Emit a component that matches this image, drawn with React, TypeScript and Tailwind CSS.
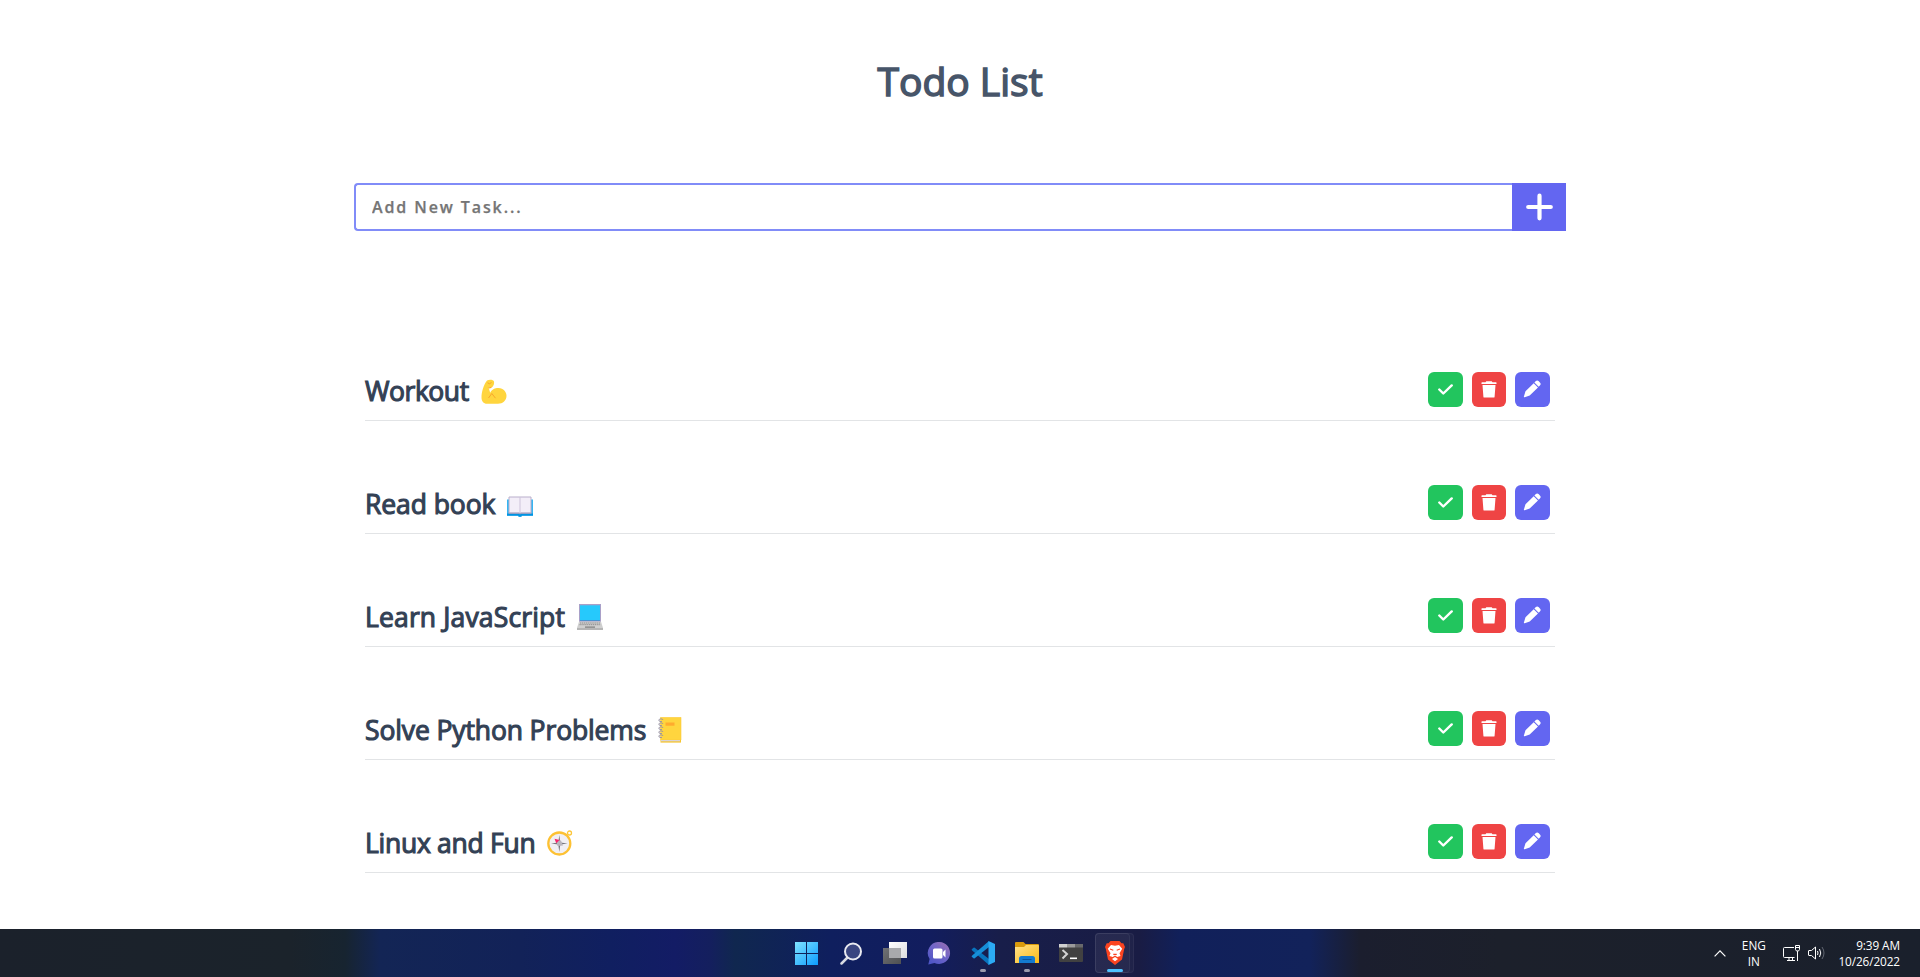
import type { ReactNode } from 'react';

function Arm() {
  return (
    <svg viewBox="0 0 26 26" className="h-[26px] w-[26px]">
      <path d="M6 1.5C8 .2 12.5.4 13 2.6c.4 1.8-.3 4.2-1.600 5.400L7.600 8.500l1.600 5.200C11 9.800 15 8.800 17.500 9c5 .3 8 3.800 8 7.800 0 4.600-3.600 8-8.500 8H6C2.500 24.800.5 22 .5 18.500.5 13 2.500 6 6 1.500Z" fill="#ffd53e" />
      <path d="M6.500 3.800q2 2 4-.3M7.500 19l3.300-4.500 3.700 4.700" fill="none" stroke="#f9a72b" strokeWidth="1" />
      <path d="m6.800 8.600 4.300-.8q-.6 1.500-2.700 1.700Z" fill="#f9a72b" />
    </svg>
  );
}

function Book() {
  return (
    <svg viewBox="0 0 26 26" className="h-[26px] w-[26px]">
      <path d="M0 5.500h2V3.800h22v1.700h2v16H14.500v1h-3v-1H0Z" fill="#35b5f2" />
      <path d="M0 19.500h26v2.300H14.500v1h-3v-1H0Z" fill="#0093e2" />
      <path d="M2 3h22v16H2Z" fill="#f3eef8" stroke="#b9aecb" />
      <path d="M13 3v16.500" stroke="#cdc3da" />
      <path d="M1.500 19.200H12l1 1 1-1h10.500" fill="none" stroke="#a79dba" />
    </svg>
  );
}

function Laptop() {
  return (
    <svg viewBox="0 0 26 26" className="h-[26px] w-[26px]">
      <path d="M2 0h22v18H2Z" fill="#a9a0c8" />
      <path d="M3 1.300h20V16H3Z" fill="#26c9fc" />
      <path d="M3 16.500h20" stroke="#4a93cf" />
      <path d="M2 17.500h22l2 6.500H0Z" fill="#cfcfcf" />
      <path d="M0 24h26v2H0Z" fill="#b5b5b5" />
      <path d="M3 19h20M2.500 20.700h21" stroke="#8e8e8e" strokeDasharray="1.300 .6" />
      <path d="M8 22.300h10v1.700H8Z" fill="#949494" />
    </svg>
  );
}

function Notebook() {
  return (
    <svg viewBox="0 0 26 26" className="h-[26px] w-[26px]">
      <path d="M2.500.3H23V23H2.500Z" fill="#ffd53e" stroke="#fbc93a" strokeWidth=".6" />
      <path d="M2.500 23H23v2.600H2.500Z" fill="#f6c52f" />
      <path d="M3 23h19v1.300H3Z" fill="#d9d3d8" />
      <path d="M7.500 5.500h9v3.200h-9Z" fill="#ffab2e" />
      <path d="M5 3c0-1.500-4-1.500-4.200 0S3 4.700 4 4.500M5 7c0-1.500-4-1.500-4.200 0S3 8.700 4 8.500M5 11c0-1.500-4-1.500-4.200 0s2.200 1.700 3.200 1.500M5 15c0-1.500-4-1.500-4.200 0s2.200 1.700 3.200 1.500M5 19c0-1.500-4-1.500-4.200 0s2.200 1.700 3.200 1.500" fill="none" stroke="#9a94a3" strokeWidth="1" />
    </svg>
  );
}

function Compass() {
  return (
    <svg viewBox="0 0 26 26" className="h-[26px] w-[26px]">
      <circle cx="22.500" cy="3" r="2" fill="none" stroke="#fcc63a" strokeWidth="1.300" />
      <circle cx="12.300" cy="13.500" r="11" fill="#f1eff3" stroke="#fdc133" strokeWidth="2.300" />
      <path d="m12.300 5 1 7.500 7.300 1-7.300 1-1 7.500-1-7.500-7.300-1 7.300-1Z" fill="#77757c" />
      <path d="m9 10 5 .5 2 5-5.500.5Z" fill="#b9b5bd" />
      <path d="m7.500 8.700 5 1.300-3.200 3.300Z" fill="#f8236c" />
    </svg>
  );
}

const tasks: { label: string; spacing: string; icon: ReactNode; offset: string }[] = [
  { label: 'Workout', spacing: 'w-[116px] tracking-[-0.450px]', icon: <Arm />, offset: 'pt-[71px]' },
  { label: 'Read book', spacing: 'w-[142px] tracking-[-0.080px]', icon: <Book />, offset: 'pt-[73px]' },
  { label: 'Learn JavaScript', spacing: 'w-[212px] tracking-[0.150px]', icon: <Laptop />, offset: 'pt-[70px]' },
  { label: 'Solve Python Problems', spacing: 'w-[293px] tracking-[-0.120px]', icon: <Notebook />, offset: 'pt-[70px]' },
  { label: 'Linux and Fun', spacing: 'w-[182px] tracking-[-0.280px]', icon: <Compass />, offset: 'pt-[70px]' },
];

function TaskRow({ task }: { task: (typeof tasks)[number] }) {
  return (
    <li className="flex h-[113px] justify-between border-b border-[#e2e4e6] pr-[5px]">
      <div className="flex">
        <span className={`pt-[64px] text-[26.500px] leading-[38px] font-medium whitespace-nowrap text-[#334155] [-webkit-text-stroke:1.1px_#334155] ${task.spacing}`}>{task.label}</span>
        <span className={task.offset}>{task.icon}</span>
      </div>
      <div className="flex pt-[64px]">
        <button aria-label="Complete" className="mr-[9px] flex h-[35px] w-[35px] items-center justify-center rounded-md bg-[#22c55e] text-white">
          <svg viewBox="0 0 16 12" className="h-[12px] w-[16px]">
            <path d="m1.300 5.500 4 4L13.700 1.400" fill="none" stroke="currentColor" strokeWidth="2.400" strokeLinecap="round" strokeLinejoin="round" />
          </svg>
        </button>
        <button aria-label="Delete" className="mr-[9px] flex h-[35px] w-[34px] items-center justify-center rounded-md bg-[#ef4444] text-white">
          <svg viewBox="0 0 16 17" className="h-[17px] w-[16px]" fill="currentColor">
            <path d="M5.300.3h5.400l.8.900H15a.5.5 0 0 1 .5.5V3H.5V1.700a.5.5 0 0 1 .5-.5h3.500ZM1.500 4.100h13l-.9 11.600a.9.9 0 0 1-.9.900H3.300a.9.9 0 0 1-.9-.9Z" />
          </svg>
        </button>
        <button aria-label="Edit" className="flex h-[35px] w-[35px] items-center justify-center rounded-md bg-[#6366f1] text-white">
          <svg viewBox="0 0 18 18" className="mr-px mb-px h-[18px] w-[18px]" fill="currentColor">
            <path d="M12.600 1.300a2.300 2.300 0 0 1 3.200 0l1.100 1.100a2.300 2.300 0 0 1 0 3.200l-1.200 1.200-4.300-4.300ZM10.700 3.200 15 7.500l-8.300 8-5 1.700a.6.6 0 0 1-.8-.8L2.500 11.300Z" />
          </svg>
        </button>
      </div>
    </li>
  );
}

function Taskbar() {
  return (
    <footer className="grid h-[48px] grid-cols-[785px_352px_1fr] bg-[linear-gradient(90deg,#1b212b_0px,#1b232b_290px,#172430_345px,#132555_380px,#122258_520px,#101f60_610px,#131c65_675px,#141f5e_710px,#10274f_735px,#0f1f5e_830px,#121d5e_930px,#181e4a_1000px,#191c44_1140px,#11205a_1180px,#12225a_1310px,#1b1e2e_1360px,#1c202b_1500px,#1a202c_1920px)] font-['Open_Sans','Noto_Sans',sans-serif] text-white">
      <div />
      <div className="flex items-center">
        <div className="flex w-[44px] justify-center pr-[2px]">
          <svg viewBox="0 0 23 23" className="mt-px h-[23px] w-[23px]">
            <defs><linearGradient id="win" x2="1" y2="1"><stop stopColor="#7fe3ff" /><stop offset="1" stopColor="#0c9cff" /></linearGradient></defs>
            <path d="M0 0h11v11H0ZM12 0h11v11H12ZM0 12h11v11H0ZM12 12h11v11H12Z" fill="url(#win)" />
          </svg>
        </div>
        <div className="flex w-[44px] justify-center">
          <svg viewBox="0 0 23 23" className="h-[23px] w-[23px]" fill="none">
            <path d="m7.500 15.500-6 6" stroke="#d7dae1" strokeWidth="2.500" strokeLinecap="round" />
            <circle cx="13" cy="9.500" r="8" fill="#3a4680" stroke="#e9eaf0" strokeWidth="2" />
          </svg>
        </div>
        <div className="flex w-[44px] justify-center">
          <svg viewBox="0 0 24 22" className="h-[22px] w-[24px]">
            <defs>
              <linearGradient id="dark" x2="1" y2="1"><stop stopColor="#6f7175" /><stop offset="1" stopColor="#4f5052" /></linearGradient>
              <linearGradient id="light" x2="1" y2="1"><stop stopColor="#fff" /><stop offset="1" stopColor="#dcdcde" /></linearGradient>
            </defs>
            <path d="M0 6h18v16H0Z" fill="url(#dark)" />
            <path d="M6 0h18v16H6Z" fill="url(#light)" />
            <path d="M6 6h12v10H6Z" fill="#a8a9ac" />
          </svg>
        </div>
        <div className="flex w-[44px] justify-center">
          <svg viewBox="0 0 24 23" className="mt-px h-[23px] w-[24px]">
            <defs><linearGradient id="chat" x1="1" x2=".2" y2="1"><stop stopColor="#9c70ae" /><stop offset=".5" stopColor="#7065c8" /><stop offset="1" stopColor="#4d55c5" /></linearGradient></defs>
            <path d="M12.500 0a11 11 0 1 1-5 21L1.300 22.400 2.600 17A11 11 0 0 1 12.500 0Z" fill="url(#chat)" />
            <rect x="6" y="6.500" width="9.500" height="10" rx="1.500" fill="#fff" />
            <path d="m16 10 2.500-2.500v8L16 13Z" fill="#fff" />
          </svg>
        </div>
        <div className="relative flex h-[48px] w-[44px] items-center justify-center">
          <svg viewBox="0 0 24 24" className="mb-px h-[24px] w-[24px]">
            <path d="m1 8 1.500-1.300a1 1 0 0 1 1.200 0L18 18v6L.9 9.300a.9.9 0 0 1 .1-1.300Z" fill="#0873bd" />
            <path d="m1 16 1.500 1.300a1 1 0 0 0 1.200 0L18 6V0L.9 14.700A.9.9 0 0 0 1 16Z" fill="#168ed8" />
            <path d="M17.500 0 24 3v18l-6.500 3Z" fill="#2cabf4" />
          </svg>
          <span className="absolute bottom-[5px] h-[3px] w-[6px] rounded-full bg-[#9a9bad]" />
        </div>
        <div className="relative flex h-[48px] w-[44px] items-center justify-center">
          <svg viewBox="0 0 24 22" className="h-[22px] w-[24px]">
            <defs><linearGradient id="folder" x2="1" y2="1"><stop stopColor="#ffe28a" /><stop offset="1" stopColor="#f9b916" /></linearGradient></defs>
            <path d="M1 0h7.500l2 2H23a1 1 0 0 1 1 1v5H0V1a1 1 0 0 1 1-1Z" fill="#d99a0c" />
            <path d="M0 5h9l2-2h12a1 1 0 0 1 1 1v17H0Z" fill="url(#folder)" />
            <path d="M4 21v-4.500a2.500 2.500 0 0 1 2.500-2.500h11a2.500 2.500 0 0 1 2.500 2.500V21Z" fill="#137ad0" />
            <path d="M7.500 17.500h9" stroke="#0a559c" />
          </svg>
          <span className="absolute bottom-[5px] h-[3px] w-[6px] rounded-full bg-[#9a9bad]" />
        </div>
        <div className="flex w-[44px] justify-center">
          <svg viewBox="0 0 24 18" className="h-[18px] w-[24px]">
            <rect width="24" height="18" rx="1" fill="#414141" />
            <path d="M0 0h8v3.500H0Z" fill="#d0d0d0" /><path d="M8 0h8v3.500H8Z" fill="#9b9b9b" /><path d="M16 0h8v3.500h-8Z" fill="#68696c" />
            <path d="m3.500 6 4.500 4-4.500 4.500" fill="none" stroke="#d3d3d3" strokeWidth="2" />
            <path d="M11 14.300h7" stroke="#fff" strokeWidth="1.600" />
          </svg>
        </div>
        <div className="relative flex h-[48px] w-[44px] items-center justify-center">
          <span className="absolute top-[4px] left-[2px] h-[40px] w-[39px] rounded-[4px] border border-white/5 bg-white/3" />
          <span className="absolute top-[4px] left-[2px] h-[40px] w-[35px] rounded-[4px] border border-white/5 bg-white/3" />
          <svg viewBox="0 0 20 24" className="relative mb-px h-[24px] w-[20px]">
            <path d="M5.500 0h9l2 2.300 1.800-.1L20 6l-.8 2L17 18.500 10 24l-7-5.500L.8 8 0 6l1.700-3.800 1.800.1Z" fill="#fb4420" />
            <path d="m6 4 4 .8L14 4l3.200 3.700-2.700 4.500 1 2.800-3.200 1L10 14.500l-2.300 1.500-3.200-1 1-2.800-2.700-4.500ZM7 18l3-2 3 2-3 2.300Z" fill="#fff" />
            <path d="m5 8 3.300 1.200M15 8l-3.300 1.200M8.300 13.300h3.400" stroke="#fb4420" strokeWidth="1.200" />
          </svg>
          <span className="absolute bottom-[5px] left-[14px] h-[3px] w-[16px] rounded-full bg-[#4cc2ff]" />
        </div>
      </div>
      <div className="flex items-center justify-end pr-[20px]">
        <svg viewBox="0 0 12 7" className="mr-[15px] h-[7px] w-[12px]" fill="none"><path d="M.6 6.300 6 .9l5.400 5.400" stroke="white" strokeWidth="1.200" /></svg>
        <div className="mr-[17px] w-[25px] text-center text-[11.800px] leading-[16px]">ENG<br />IN</div>
        <svg viewBox="0 0 18 17" className="mr-[7px] h-[17px] w-[18px]" fill="none" stroke="#fff">
          <path d="M11 2.500H1.500a1 1 0 0 0-1 1v8a1 1 0 0 0 1 1h10M4 15.500h8M6 12.500v3M9.500 12.500v3M12.500.5h4v4l-1 1.500h-2l-1-1.500ZM12.500 2.500h4M14.500 6v10" />
        </svg>
        <svg viewBox="0 0 18 14" className="mr-[12px] h-[14px] w-[18px]" fill="none" stroke="#fff">
          <path d="M1 4.500h2.500L7.500 1v12L3.500 9.500H1a.5.5 0 0 1-.5-.5V5A.5.5 0 0 1 1 4.500ZM9.500 5q1 2 0 4M11.500 3q2.500 4 0 8" />
          <path d="M14 1q4 6 0 12" stroke="#616671" />
        </svg>
        <div className="mb-px text-right text-[11.800px] leading-[16px] tracking-[-0.100px] whitespace-nowrap">9:39 AM<br />10/26/2022</div>
      </div>
    </footer>
  );
}

export default function App() {
  return (
    <div className="flex h-[977px] w-full flex-col overflow-hidden bg-white font-['Open_Sans','Noto_Sans',sans-serif]">
      <main className="mx-auto flex w-[1212px] flex-1 flex-col">
        <h1 className="pt-[53px] text-center text-[39px] leading-[56px] font-medium tracking-[0px] text-[#475569] [-webkit-text-stroke:1.500px_#475569]">Todo List</h1>
        <form className="mt-[74px] flex h-[48px]">
          <input
            placeholder="Add New Task..."
            className="h-[48px] flex-1 rounded-l-[4px] border-2 border-r-0 border-[#818cf8] px-4 text-[16px] font-semibold tracking-[1.900px] outline-none [-webkit-text-stroke:0.250px_#757575] placeholder:text-[#757575]"
          />
          <button type="button" aria-label="Add task" className="flex w-[54px] items-center justify-center bg-[#6366f1]">
            <svg viewBox="0 0 28 28" className="h-[28px] w-[28px]"><path d="M14.500 2.700v22.600M3.200 14h22.600" stroke="#fff" strokeWidth="4.200" strokeLinecap="round" /></svg>
          </button>
        </form>
        <ul className="mx-[11px] mt-[77px]">
          {tasks.map((task) => <TaskRow key={task.label} task={task} />)}
        </ul>
      </main>
      <Taskbar />
    </div>
  );
}
